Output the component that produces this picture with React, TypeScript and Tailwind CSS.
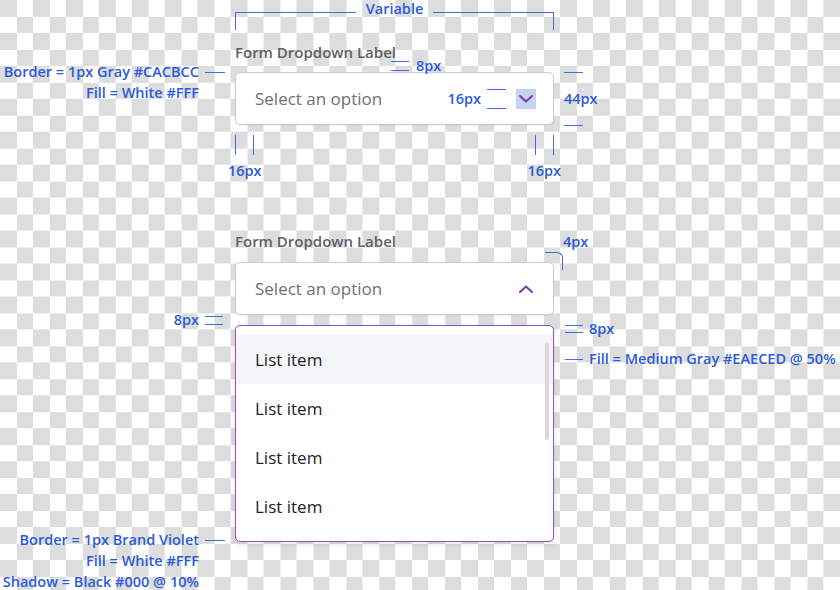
const NOTE = "whitespace-nowrap text-[14.5px] leading-[20px] font-semibold text-[#2c5bd8]";
const LINE = "bg-[#3f6ee0]";

function Chevron({ up }: { up?: boolean }) {
  return (
    <svg width="16" height="10" viewBox="0 0 16 10" fill="none">
      <path
        d={up ? "M2 8 L8 2.5 L14 8" : "M2 2 L8 7.5 L14 2"}
        stroke="#7b3ba0"
        strokeWidth="2"
        strokeLinecap="round"
        strokeLinejoin="round"
      />
    </svg>
  );
}

// two short parallel lines marking a distance
function Gap({ w, h }: { w: number; h: number }) {
  return (
    <div className="flex flex-col justify-between" style={{ width: w, height: h }}>
      <div className={`h-px ${LINE}`} />
      <div className={`h-px ${LINE}`} />
    </div>
  );
}

function Ticks() {
  return (
    <div className="flex flex-col items-center">
      <div className="flex gap-[17px] h-[20px]">
        <div className={`w-px ${LINE}`} />
        <div className={`w-px ${LINE}`} />
      </div>
      <div className={`mt-[6px] ${NOTE}`}>16px</div>
    </div>
  );
}

export default function App() {
  return (
    <div className="relative w-[840px] h-[590px] overflow-hidden font-['Open_Sans',sans-serif] bg-[conic-gradient(#fff_25%,#dddddd_0_50%,#fff_0_75%,#dddddd_0)] bg-[length:32.94px_32.94px]">
      <div className="ml-[235px] w-[319px] flex flex-col">
        {/* width annotation */}
        <div className="h-[30px] flex items-start">
          <div className="flex-1 mt-[12px] h-[18px] border-t border-l border-[#3f6ee0]" />
          <span className={`-mt-[1px] px-[10px] ${NOTE} leading-[16px]`}>Variable</span>
          <div className="flex-1 mt-[12px] h-[18px] border-t border-r border-[#3f6ee0]" />
        </div>

        <div className="mt-[12px] h-[20px] leading-[20px] text-[15px] font-semibold text-[#5d6167]">
          Form Dropdown Label
        </div>
        <div className="mt-[10px] h-[53px] flex items-center pl-[19px] pr-[17px] bg-white border border-[#cacbcc] rounded-[5px] shadow-[0_1px_2px_rgba(0,0,0,0.06)]">
          <span className="flex-1 text-[17px] text-[#6c7077]">Select an option</span>
          <div className="flex items-center gap-[6px] mr-[10px]">
            <span className={NOTE}>16px</span>
            <Gap w={19} h={20} />
          </div>
          <span className="w-[20px] h-[20px] flex items-center justify-center bg-[#c6d2f3]">
            <Chevron />
          </span>
        </div>
        <div className="mt-[10px] flex justify-between -mx-[7px]">
          <Ticks />
          <Ticks />
        </div>

        <div className="mt-[50px] h-[20px] leading-[20px] text-[15px] font-semibold text-[#5d6167]">
          Form Dropdown Label
        </div>
        <div className="mt-[11px] h-[53px] flex items-center justify-between pl-[19px] pr-[19px] bg-white border border-[#cacbcc] rounded-[5px] shadow-[0_1px_2px_rgba(0,0,0,0.06)]">
          <span className="text-[17px] text-[#6c7077]">Select an option</span>
          <Chevron up />
        </div>

        <div className="relative mt-[10px] h-[217px] pt-[9px] bg-white border border-solid border-[color:#9650bf] rounded-[5px] shadow-[0_2px_6px_rgba(0,0,0,0.1)]">
          {["List item", "List item", "List item", "List item"].map((t, i) => (
            <div
              key={i}
              className={`h-[49px] flex items-center pl-[19px] text-[17px] text-[#222325] ${i === 0 ? "bg-[#f4f5f6]" : ""}`}
            >
              {t}
            </div>
          ))}
          <div className="absolute left-[309px] top-[17px] w-[4px] h-[97px] rounded-full bg-[#d9d9d9]" />
        </div>
      </div>

      {/* annotations on the canvas */}
      <div className="absolute left-[391px] top-[56px] flex items-center gap-[7px]">
        <Gap w={18} h={10} />
        <span className={NOTE}>8px</span>
      </div>

      <div className="absolute left-[564px] top-[72px] w-[36px] h-[54px] flex flex-col justify-between">
        <div className={`w-[19px] h-px ${LINE}`} />
        <span className={NOTE}>44px</span>
        <div className={`w-[19px] h-px ${LINE}`} />
      </div>

      <div className="absolute right-[641px] top-[62px] flex flex-col items-end">
        <div className="flex items-center gap-[6px]">
          <span className={NOTE}>Border = 1px Gray #CACBCC</span>
          <div className={`w-[20px] h-px ${LINE} -mr-[26px]`} />
        </div>
        <span className={`mt-px ${NOTE}`}>Fill = White #FFF</span>
      </div>

      <span className={`absolute left-[563px] top-[232px] ${NOTE}`}>4px</span>
      <div className="absolute left-[545px] top-[252px] w-[18px] h-[18px] border-t border-r border-[#3f6ee0] rounded-tr-[6px]" />

      <div className="absolute right-[617px] top-[310px] flex items-center gap-[6px]">
        <span className={NOTE}>8px</span>
        <Gap w={18} h={9} />
      </div>

      <div className="absolute left-[565px] top-[319px] flex flex-col">
        <div className="flex items-center gap-[6px]">
          <Gap w={18} h={8} />
          <span className={NOTE}>8px</span>
        </div>
        <div className="mt-[10px] flex items-center gap-[6px]">
          <div className={`w-[18px] h-px ${LINE}`} />
          <span className={NOTE}>Fill = Medium Gray #EAECED @ 50%</span>
        </div>
      </div>

      <div className="absolute right-[641px] top-[530px] flex flex-col items-end gap-px">
        <div className="flex items-center gap-[6px]">
          <span className={NOTE}>Border = 1px Brand Violet</span>
          <div className={`w-[20px] h-px ${LINE} -mr-[26px]`} />
        </div>
        <span className={NOTE}>Fill = White #FFF</span>
        <span className={`${NOTE} leading-[18px]`}>Shadow = Black #000 @ 10%</span>
      </div>
    </div>
  );
}
